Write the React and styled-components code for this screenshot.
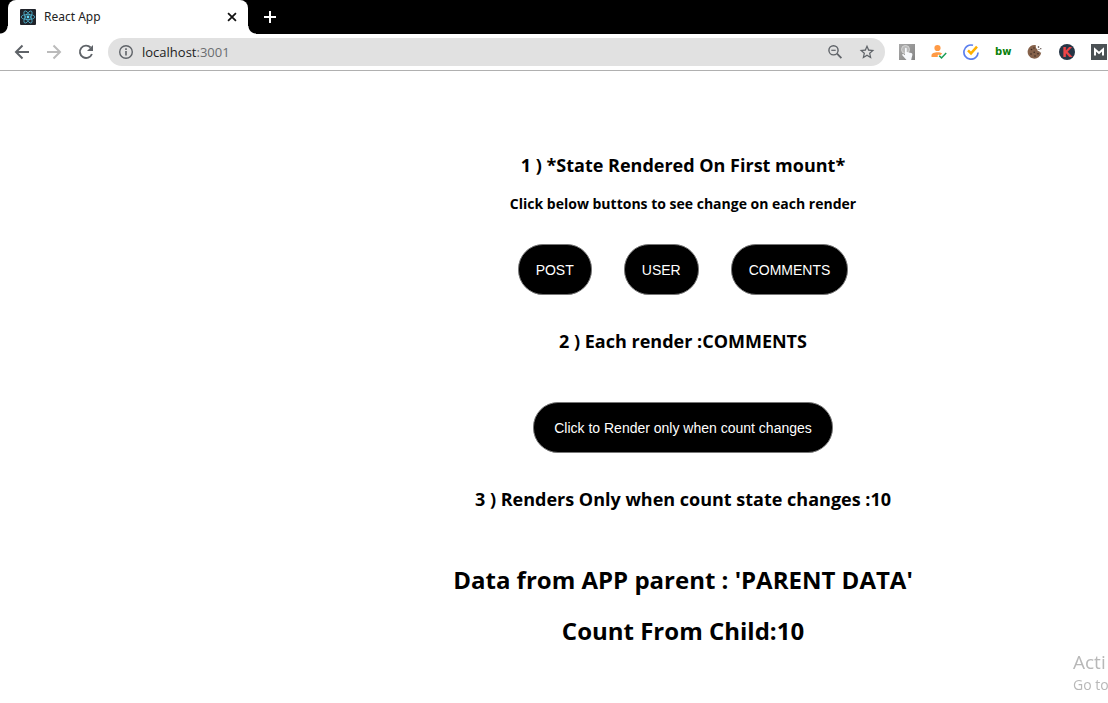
import React, { useState } from "react";
import styled, { createGlobalStyle } from "styled-components";

const Global = createGlobalStyle`
  * { box-sizing: border-box; }
  body { margin: 0; background: #fff; color: #000; font-family: "Open Sans", "Noto Sans", sans-serif; overflow-x: hidden; }
  svg { display: block; }
`;

const TabStrip = styled.div`
  display: flex;
  align-items: center;
  height: 34px;
  padding-left: 8px;
  background: #000;
`;

const Tab = styled.div`
  position: relative;
  display: flex;
  align-items: center;
  gap: 8px;
  width: 240px;
  height: 34px;
  padding: 0 9px 0 12px;
  background: #fff;
  border-radius: 8px 8px 0 0;
  &::before, &::after {
    content: "";
    position: absolute;
    bottom: 0;
    width: 8px;
    height: 8px;
  }
  &::before { right: 100%; background: radial-gradient(circle at 0 0, #000 7px, #fff 8px); }
  &::after { left: 100%; background: radial-gradient(circle at 100% 0, #000 7px, #fff 8px); }
`;

const TabTitle = styled.span`
  flex: 1;
  font: 12px/16px "Noto Sans", "Open Sans", sans-serif;
  color: #222;
`;

const IconButton = styled.button`
  display: grid;
  place-items: center;
  flex: none;
  width: ${(p) => p.$size || 16}px;
  height: ${(p) => p.$size || 16}px;
  padding: 0;
  border: 0;
  background: none;
  color: ${(p) => p.$color || "#5f6368"};
`;

const NewTab = styled(IconButton)`
  margin-left: 14px;
`;

const Toolbar = styled.div`
  display: flex;
  align-items: center;
  height: 37px;
  padding: 0 1px 0 14px;
  border-bottom: 1px solid #b0b0b0;
  background: #fff;
`;

const NavGroup = styled.nav`
  display: flex;
  gap: 16px;
  margin-right: 14px;
`;

const AddressBar = styled.div`
  display: flex;
  align-items: center;
  flex: 1;
  min-width: 0;
  height: 28px;
  padding: 0 10px;
  border-radius: 14px;
  background: #e1e1e1;
  color: #5f6368;
`;

const Address = styled.div`
  flex: 1;
  margin-left: 8px;
  font: 13px/20px "Open Sans", sans-serif;
  color: #6a6d70;
  b { font-weight: 400; color: #222; }
`;

const AddressTools = styled.div`
  display: flex;
  gap: 16px;
`;

const Extensions = styled.div`
  display: flex;
  gap: 16px;
  margin-left: 14px;
`;

const Page = styled.main`
  display: flex;
  flex-direction: column;
  align-items: center;
  padding: 82px 0 48px 258px;
  text-align: center;
`;

const Heading = styled.h3`
  margin: 0;
  font-size: 18px;
  line-height: 24px;
  font-weight: 700;
`;

const Hint = styled.h4`
  margin: 17px 0 30px;
  font-size: 14px;
  line-height: 20px;
  font-weight: 700;
`;

const ButtonRow = styled.div`
  display: flex;
  gap: 32px;
  margin-bottom: 34px;
`;

const PillButton = styled.button`
  height: 51px;
  padding: 0 ${(p) => (p.$wide ? 20 : 17)}px;
  border: 1px solid #777;
  border-radius: 25px;
  background: #000;
  color: #fff;
  font: 14px/16px "Liberation Sans", Arial, sans-serif;
`;

const CountRow = styled(ButtonRow)`
  margin-top: 49px;
`;

const ParentData = styled.section`
  display: flex;
  flex-direction: column;
  gap: 17px;
  margin-top: 52px;
`;

const BigLine = styled.h2`
  margin: 0;
  font-size: 24px;
  line-height: 34px;
  font-weight: 700;
`;

const Watermark = styled.aside`
  position: fixed;
  right: 0;
  bottom: 8px;
  width: 35px;
  overflow: hidden;
  white-space: nowrap;
  color: #b8b8b8;
  font-size: 14px;
  line-height: 20px;
`;

const WatermarkTitle = styled.div`
  font-size: 19px;
  line-height: 26px;
`;

const Favicon = () => (
  <svg width="16" height="16" viewBox="0 0 16 16" aria-hidden="true">
    <rect width="16" height="16" rx="1" fill="#20232a" />
    <g fill="none" stroke="#4fb3cf" strokeWidth="0.8">
      <ellipse cx="8" cy="8" rx="6.8" ry="2.6" />
      <ellipse cx="8" cy="8" rx="6.8" ry="2.6" transform="rotate(60 8 8)" />
      <ellipse cx="8" cy="8" rx="6.8" ry="2.6" transform="rotate(120 8 8)" />
    </g>
    <circle cx="8" cy="8" r="1.4" fill="#61dafb" />
  </svg>
);

const Glyph = ({ d, size = 16, width = 2 }) => (
  <svg width={size} height={size} viewBox="0 0 16 16" fill="none" stroke="currentColor" strokeWidth={width} aria-hidden="true">
    <path d={d} />
  </svg>
);

const InfoIcon = () => (
  <svg width="16" height="16" viewBox="0 0 16 16" aria-hidden="true">
    <circle cx="8" cy="8" r="6.3" fill="none" stroke="#5f6368" strokeWidth="1.4" />
    <path d="M7.2 7h1.6v4.5H7.2zM7.2 4.3h1.6v1.6H7.2z" fill="#5f6368" />
  </svg>
);

const ZoomOutIcon = () => (
  <svg width="16" height="16" viewBox="0 0 16 16" fill="none" stroke="#5f6368" aria-hidden="true">
    <circle cx="6.5" cy="6.3" r="4.6" strokeWidth="1.4" />
    <path d="M10 9.7l4.4 4.4" strokeWidth="1.8" />
    <path d="M4.3 6.3h4.4" strokeWidth="1.2" />
  </svg>
);

const StarIcon = () => (
  <svg width="16" height="16" viewBox="0 0 24 24" fill="#5f6368" aria-hidden="true">
    <path d="M23 9l-7.900-.7L12 1 8.900 8.300 1 9l6 5.200L5.200 22 12 17.900 18.800 22 17 14.200 23 9zM12 15.800l-4.100 2.500 1.100-4.700-3.600-3.100 4.800-.4L12 5.700l1.800 4.400 4.800.4-3.600 3.100 1.100 4.700L12 15.800z" />
  </svg>
);

const ReloadIcon = () => (
  <svg width="16" height="16" viewBox="0 0 16 16" aria-hidden="true">
    <path d="M13.900 10a6.200 6.200 0 1 1-1.300-6.500" fill="none" stroke="currentColor" strokeWidth="1.900" />
    <path d="M15 1v6H9z" fill="currentColor" />
  </svg>
);

const TouchIcon = () => (
  <svg width="16" height="16" viewBox="0 0 16 16" aria-hidden="true">
    <defs>
      <linearGradient id="touchShade" x2="1" y2="1">
        <stop stopColor="#a8a8a8" />
        <stop offset="1" stopColor="#858585" />
      </linearGradient>
    </defs>
    <rect width="16" height="16" fill="url(#touchShade)" />
    <circle cx="6.500" cy="5.500" r="4" fill="#bbb" stroke="#d6d6d6" />
    <path d="M6 4.500c0-1 1.700-1 1.700 0V8l4.500 1c1 .3 1.400 1 1.200 2l-.8 3-.4 2H7.500L3.300 11.200c-.3-1 .8-1.400 1.500-.8L6 11.300z" fill="#f7f9fc" />
  </svg>
);

const PersonIcon = () => (
  <svg width="16" height="16" viewBox="0 0 16 16" aria-hidden="true">
    <circle cx="6.500" cy="4" r="3.100" fill="#ff9a45" />
    <path d="M.5 13v-1.500C.5 9.300 3.500 8.200 6.500 8.200c2 0 3.500.4 4.700 1.200L9 11.500l-1.200-.9-1.500 1.500.9.900z" fill="#ff9a45" />
    <path d="M8.200 11.700l2.300 2.200 4.700-5" fill="none" stroke="#1a9e57" strokeWidth="1.500" />
  </svg>
);

const TickIcon = () => (
  <svg width="16" height="16" viewBox="0 0 16 16" fill="none" aria-hidden="true">
    <path d="M10 1.300A7.100 7.100 0 1 0 15.100 8.500" stroke="#5b7fee" strokeWidth="1.700" />
    <path d="M5 6.400l3 3L14 2.700" stroke="#ffb000" strokeWidth="2.500" />
  </svg>
);

const BwMark = styled.span`
  display: grid;
  place-items: center;
  width: 16px;
  height: 16px;
  color: #0a800a;
  font: 700 10px/14px "DejaVu Sans", sans-serif;
`;

const CookieIcon = () => (
  <svg width="16" height="16" viewBox="0 0 16 16" aria-hidden="true">
    <path d="M9 1.200a6.800 6.800 0 1 0 5.200 7.300c-1 .2-1.700-.3-1.800-1.300-1.400.2-2.300-.5-2-1.900C9 5 8.400 3 9 1.200z" fill="#85614a" />
    <g fill="#3b2a24">
      <circle cx="4.500" cy="5.500" r=".8" /><circle cx="7.200" cy="8.200" r=".8" /><circle cx="4" cy="10" r=".8" />
      <circle cx="8" cy="12" r=".8" /><circle cx="11" cy="9.700" r=".8" /><circle cx="7" cy="4" r=".7" />
      <circle cx="11.500" cy="3" r=".8" /><circle cx="13.800" cy="4.700" r=".6" /><circle cx="12" cy="5.500" r=".5" />
    </g>
  </svg>
);

const KBadge = styled.span`
  display: grid;
  place-items: center;
  width: 16px;
  height: 16px;
  border-radius: 8px;
  background: #263545;
  color: #ee4548;
  font: 700 14px/16px "Liberation Sans Narrow", "DejaVu Sans Condensed", sans-serif;
`;

const MIcon = () => (
  <svg width="16" height="16" viewBox="0 0 16 16" aria-hidden="true">
    <rect width="16" height="16" fill="#4b5154" />
    <path d="M4 11.500V5.500l4 3.500 4-3.500v6" fill="none" stroke="#fff" strokeWidth="2" />
  </svg>
);

const choices = ["POST", "USER", "COMMENTS"];

export default function App() {
  const [kind, setKind] = useState("COMMENTS");
  const [count, setCount] = useState(10);

  return (
    <>
      <Global />
      <header>
        <TabStrip>
          <Tab>
            <Favicon />
            <TabTitle>React App</TabTitle>
            <IconButton $size={14} $color="#111" aria-label="Close tab">
              <Glyph size={14} d="M3.500 3.500l9 9M12.500 3.500l-9 9" />
            </IconButton>
          </Tab>
          <NewTab $color="#fff" aria-label="New tab">
            <Glyph d="M8 2v12M2 8h12" />
          </NewTab>
        </TabStrip>
        <Toolbar>
          <NavGroup>
            <IconButton aria-label="Back"><Glyph d="M15 8H2.500M8.500 1.500L2 8l6.500 6.500" /></IconButton>
            <IconButton $color="#bbb" aria-label="Forward"><Glyph d="M1 8h12.500M7.500 1.500L14 8l-6.500 6.500" /></IconButton>
            <IconButton aria-label="Reload"><ReloadIcon /></IconButton>
          </NavGroup>
          <AddressBar>
            <InfoIcon />
            <Address><b>localhost</b>:3001</Address>
            <AddressTools>
              <IconButton aria-label="Zoom"><ZoomOutIcon /></IconButton>
              <IconButton aria-label="Bookmark"><StarIcon /></IconButton>
            </AddressTools>
          </AddressBar>
          <Extensions>
            <TouchIcon />
            <PersonIcon />
            <TickIcon />
            <BwMark>bw</BwMark>
            <CookieIcon />
            <KBadge>K</KBadge>
            <MIcon />
          </Extensions>
        </Toolbar>
      </header>
      <Page>
        <Heading>1 ) *State Rendered On First mount*</Heading>
        <Hint>Click below buttons to see change on each render</Hint>
        <ButtonRow>
          {choices.map((c) => (
            <PillButton key={c} onClick={() => setKind(c)}>{c}</PillButton>
          ))}
        </ButtonRow>
        <Heading>2 ) Each render :{kind}</Heading>
        <CountRow>
          <PillButton $wide onClick={() => setCount(count + 1)}>Click to Render only when count changes</PillButton>
        </CountRow>
        <Heading>3 ) Renders Only when count state changes :{count}</Heading>
        <ParentData>
          <BigLine>Data from APP parent : 'PARENT DATA'</BigLine>
          <BigLine>Count From Child:{count}</BigLine>
        </ParentData>
      </Page>
      <Watermark>
        <WatermarkTitle>Acti</WatermarkTitle>
        Go to
      </Watermark>
    </>
  );
}
